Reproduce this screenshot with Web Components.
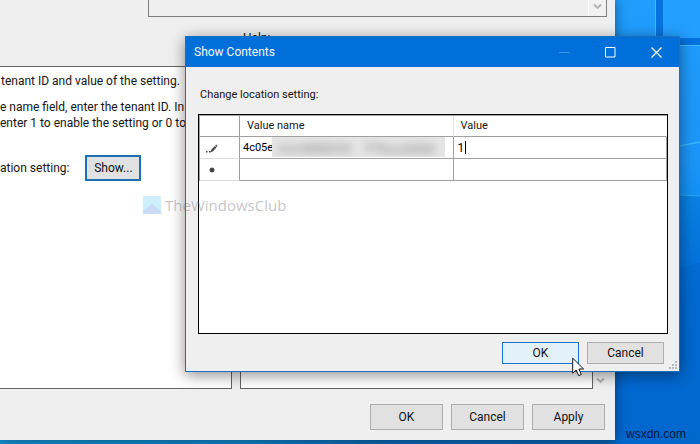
<!DOCTYPE html>
<html lang="en">
<head>
<meta charset="utf-8">
<title>Show Contents</title>
<style>
  html, body { height: 100%; margin: 0; overflow: hidden; }
  body { font: 12px/16px Roboto, "Liberation Sans", sans-serif; color: #151515; }
</style>
</head>
<body>
<desktop-screen></desktop-screen>

<template id="t-button">
  <style>
    :host { display: block; width: 73px; height: 26px; }
    :host([size="dialog"]) { width: 77px; height: 22px; }
    :host([size="small"]) { width: 56px; }
    button { display: block; width: 100%; height: 100%; box-sizing: border-box; padding: 0; border: 1px solid #adadad; background: #e1e1e1; color: #111; font: inherit; border-radius: 0; }
    :host([kind="focus"]) button { border: 2px solid #1a70b5; }
    :host([kind="hot"]) button { border-color: #1a74c4; background: #e3f1fb; }
  </style>
  <button type="button"><slot></slot></button>
</template>

<template id="t-policy">
  <style>
    :host { display: flex; flex-direction: column; background: #efefef; box-shadow: 0 0 12px rgba(0,0,0,.45); overflow: hidden; }
    .comment { display: flex; height: 17px; box-sizing: border-box; margin: 0 8px 0 148px; border: 1px solid #7f7f7f; border-top: 0; justify-content: flex-end; }
    .scroll { width: 17px; border-left: 1px solid #fff; background: #f1f1f1; }
    .scroll svg { display: block; margin: 3px 0 0 4px; }
    .label { padding: 13px 0 20px 243px; }
    .panes { flex: 1; min-height: 0; display: grid; grid-template-columns: 232px 1fr; gap: 8px; padding-right: 8px; }
    .options { background: #fff; border: 1px solid #646464; border-left: 0; padding-top: 6px; white-space: nowrap; }
    p { margin: 0 0 10px; }
    .first { padding-left: 1px; }
    .next { display: block; }
    .setting { display: flex; align-items: center; gap: 16px; margin-top: 24px; }
    .help { display: flex; min-width: 0; }
    .text { flex: 1; background: #fff; border: 1px solid #646464; }
    .bar { width: 14px; display: flex; align-items: flex-end; justify-content: center; padding-bottom: 5px; box-sizing: border-box; }
    footer { display: flex; justify-content: flex-end; gap: 8px; padding: 15px 10px 10px; }
  </style>
  <div class="comment"><div class="scroll"><svg width="9" height="7" viewBox="0 0 9 7"><path d="M1 1.5l3.5 3.3L8 1.5" fill="none" stroke="#b5b5b5" stroke-width="2"/></svg></div></div>
  <div class="label">Help:</div>
  <div class="panes">
    <div class="options">
      <p class="first">tenant ID and value of the setting.</p>
      <p>e name field, enter the tenant ID. In t<span class="next">enter 1 to enable the setting or 0 to</span></p>
      <div class="setting"><span>ation setting:</span><win-button kind="focus" size="small">Show...</win-button></div>
    </div>
    <div class="help"><div class="text"></div><div class="bar"><svg width="9" height="7" viewBox="0 0 9 7"><path d="M1 1.5l3.5 3.3L8 1.5" fill="none" stroke="#b5b5b5" stroke-width="2"/></svg></div></div>
  </div>
  <footer><win-button>OK</win-button><win-button>Cancel</win-button><win-button>Apply</win-button></footer>
</template>

<template id="t-table">
  <style>
    :host { display: block; background: #fff; border: 1px solid #000; font-size: 11px; }
    table { width: 100%; border-collapse: separate; border-spacing: 0; table-layout: fixed; border-top: 1px solid #a0a0a0; border-left: 1px solid #a0a0a0; box-sizing: border-box; }
    .c0 { width: 40px; }
    th, td { height: 21px; padding: 0; box-sizing: content-box; border-bottom: 1px solid #a0a0a0; border-right: 1px solid #a0a0a0; text-align: left; font-weight: 400; }
    thead th { height: 20px; }
    thead th + th { padding-left: 7px; }
    thead th:nth-child(2) { border-right-color: #e2e2e2; }
    thead th:last-child { border-right-color: #fff; }
    tbody th { border-bottom-color: #dcdcdc; }
    tbody th svg { display: block; margin-left: 5px; }
    .cell { display: flex; align-items: center; height: 21px; padding-left: 3px; }
    input { border: 0; padding: 0; margin: 0; background: none; font: inherit; color: #000; outline: 0; width: 100%; min-width: 0; }
    .id { padding-right: 8px; }
    .id input { width: 29px; flex: none; }
    .mask { flex: 1; align-self: stretch; margin-bottom: 1px; overflow: hidden; background: #e4e4e4; }
    .mask svg { display: block; width: 100%; height: 100%; }
    .one { font-size: 12px; padding-left: 4px; }
    .one input { width: 7px; }
    .caret { width: 1px; height: 13px; background: #000; }
  </style>
  <table>
    <colgroup><col class="c0"><col><col></colgroup>
    <thead><tr><th></th><th scope="col">Value name</th><th scope="col">Value</th></tr></thead>
    <tbody>
      <tr>
        <th><svg width="16" height="12" viewBox="0 0 16 12"><path d="M1 9h1.500v1.500H1zM4 9h1.500v1.500H4zM5.500 10.500l.8-2.800L9.800 4l1.600 1.500L8 9.200zM10.200 3.500l.9-.9 1.500 1.500-.9.900z" fill="#444"/></svg></th>
        <td><div class="cell id"><input aria-label="Value name" value="4c05e"><span class="mask"><svg viewBox="0 0 174 20" preserveAspectRatio="none"><defs><filter id="soft" x="-20%" y="-80%" width="140%" height="260%"><feGaussianBlur stdDeviation="4"/></filter></defs><g fill="#bdbdbd" filter="url(#soft)"><path d="M6 9h34v6H6zM32 7h26v9H32zM58 8h22v7H58zM94 7h20v6H94zM110 10h26v6h-26zM134 8h30v8h-30z"/></g></svg></span></div></td>
        <td><div class="cell one"><input aria-label="Value" value="1"><span class="caret"></span></div></td>
      </tr>
      <tr>
        <th><svg width="16" height="12" viewBox="0 0 16 12"><path d="M7 3.500v5M4.500 6h5M5.200 4.200l3.600 3.600M8.800 4.200L5.200 7.800" stroke="#444" stroke-width="1.300"/></svg></th>
        <td><div class="cell"><input aria-label="Value name"></div></td>
        <td><div class="cell"><input aria-label="Value"></div></td>
      </tr>
    </tbody>
  </table>
</template>

<template id="t-dialog">
  <style>
    :host { display: flex; flex-direction: column; box-sizing: border-box; background: #efefef; border: 1px solid #1b70bd; box-shadow: 0 3px 14px rgba(0,0,0,.45); }
    header { display: flex; align-items: center; height: 30px; padding-left: 8px; background: #006fd9; color: #f4faff; }
    h1 { flex: 1; margin: 0; font: inherit; }
    header button { width: 46px; height: 30px; padding: 0; border: 0; background: none; display: grid; place-items: center; }
    header svg { fill: none; stroke: #fff; }
    .body { flex: 1; min-height: 0; display: flex; flex-direction: column; padding: 20px 11px 7px 12px; }
    .caption { font-size: 11px; padding: 0 0 11px 2px; }
    value-table { flex: 1; min-height: 0; }
    footer { display: flex; justify-content: flex-end; gap: 8px; padding: 8px 4px 0; }
    .grip { position: absolute; right: 1px; bottom: 1px; fill: #b9b9b9; }
  </style>
  <header>
    <h1>Show Contents</h1>
    <button type="button" aria-label="Minimize" disabled><svg width="11" height="11" viewBox="0 0 11 11"><path d="M0 5.500h11" style="stroke:#3794e8"/></svg></button>
    <button type="button" aria-label="Maximize"><svg width="11" height="11" viewBox="0 0 11 11"><path d="M.5.5h9.500v9.500H.5z"/></svg></button>
    <button type="button" aria-label="Close"><svg width="11" height="11" viewBox="0 0 11 11"><path d="M.5.5l10 10M10.500.5l-10 10" stroke-width="1.200"/></svg></button>
  </header>
  <div class="body">
    <div class="caption">Change location setting:</div>
    <value-table></value-table>
    <footer><win-button kind="hot" size="dialog">OK</win-button><win-button size="dialog">Cancel</win-button></footer>
  </div>
  <svg class="grip" width="9" height="9" viewBox="0 0 9 9"><path d="M6 0h2v2H6zM3 3h2v2H3zM6 3h2v2H6zM0 6h2v2H0zM3 6h2v2H3zM6 6h2v2H6z"/></svg>
</template>

<template id="t-desktop">
  <style>
    :host { display: block; position: relative; height: 100%; min-height: 300px; overflow: hidden; }
    .wall { position: absolute; inset: 0; width: 100%; height: 100%; }
    policy-window { position: absolute; inset: 0 85px 4px 0; }
    contents-dialog { position: absolute; inset: 36px 20px 72px 185px; }
    .mark { position: absolute; left: 143px; top: 195px; display: flex; align-items: center; gap: 4px; font: 15px/20px "Open Sans", sans-serif; color: rgba(110,110,118,.42); }
    .pointer { position: absolute; left: 572px; top: 357px; }
    .site { position: absolute; right: 14px; bottom: 2px; font: 12px/16px "Liberation Sans", sans-serif; color: #06183c; }
  </style>
  <svg class="wall" viewBox="0 0 700 444" preserveAspectRatio="none">
    <defs>
      <linearGradient id="sky" x2="0" y2="1"><stop offset="0" stop-color="#219dfd"/><stop offset=".36" stop-color="#1b95f8"/><stop offset=".44" stop-color="#1290f4"/><stop offset="1" stop-color="#0b78df"/></linearGradient>
      <linearGradient id="low" x2="0" y2="1"><stop offset="0" stop-color="#0a80e4"/><stop offset=".45" stop-color="#0069d3"/><stop offset="1" stop-color="#0067cb"/></linearGradient>
      <linearGradient id="edge"><stop offset="0" stop-color="#1292d4"/><stop offset=".4" stop-color="#0f83c9"/><stop offset=".6" stop-color="#0b69b5"/><stop offset="1" stop-color="#0863b8"/></linearGradient>
    </defs>
    <path d="M0 0h700v444H0z" fill="url(#sky)"/>
    <path d="M656 0h7v38h37v7h-44z" fill="#0672dd"/>
    <path d="M655.500 0v38M680 45.500h20" stroke="#39b8fa" fill="none"/>
    <path d="M663 0h37v38h-37z" fill="#239fff"/>
    <path d="M680 146l20-4" stroke="#36b4f8" stroke-width="1.500"/>
    <path d="M600 192l80 3 20 1v248H600z" fill="url(#low)"/>
    <path d="M680 195l20 1" stroke="#2ba5f4"/>
    <path d="M680 268l20-5v181h-84V300z" fill="#0067d0" opacity=".55"/>
    <path d="M0 440h615v4H0z" fill="url(#edge)"/>
  </svg>
  <policy-window></policy-window>
  <contents-dialog></contents-dialog>
  <div class="mark"><svg width="18" height="18" viewBox="0 0 18 18"><path d="M0 0h18v18H0z" fill="#cdeffb"/><path d="M0 18v-3L9 8l9 7v3z" fill="#c9daf4"/></svg><span>TheWindowsClub</span></div>
  <svg class="pointer" width="13" height="20" viewBox="0 0 13 20"><path d="M.7 1.200v15l3.500-3.200 2.400 5.600 2.700-1.100-2.400-5.500h4.700z" fill="#fff" stroke="#111" stroke-width="1"/></svg>
  <span class="site">wsxdn.com</span>
</template>

<script>
  const define = (name, templateId) => customElements.define(name, class extends HTMLElement {
    constructor() {
      super();
      this.attachShadow({ mode: 'open' }).append(document.getElementById(templateId).content.cloneNode(true));
    }
  });
  define('win-button', 't-button');
  define('value-table', 't-table');
  define('policy-window', 't-policy');
  define('contents-dialog', 't-dialog');
  define('desktop-screen', 't-desktop');
</script>
</body>
</html>
